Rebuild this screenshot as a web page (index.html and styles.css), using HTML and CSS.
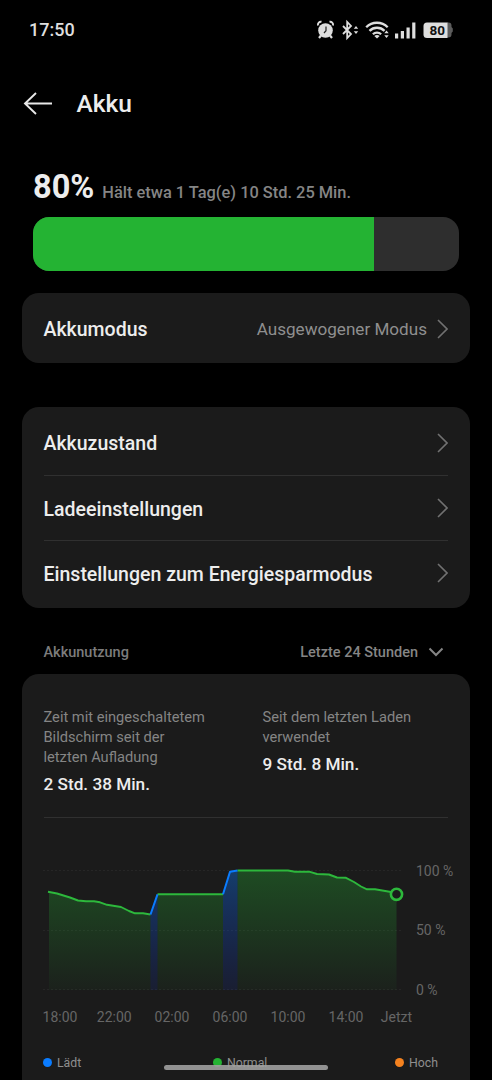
FILE: index.html
```html
<!DOCTYPE html>
<html lang="de">
<head>
    <meta charset="UTF-8">
    <meta name="viewport" content="width=device-width, initial-scale=1.0">
    <title>Akku</title>
    <link rel="stylesheet" href="styles.css">
</head>
<body>
    <div class="status-bar">
        <span class="clock">17:50</span>
        <svg class="status-icons" width="140" height="24" viewBox="0 0 140 24">
            <!-- Wecker -->
            <g fill="none" stroke="#dedede">
                <circle cx="12.500" cy="12.500" r="7.300" fill="#dedede" stroke="none"/>
                <path d="M5 7.500a3 3 0 0 1 3.500-3.700M20 7.500a3 3 0 0 0-3.500-3.700" stroke-width="1.900"/>
                <path d="M8 17.500l-2 2.500M17 17.500l2 2.500" stroke-width="2.200"/>
                <path d="M13 8.500v4.200l-2 2.300" stroke="#222" stroke-width="1.200"/>
            </g>
            <!-- Bluetooth -->
            <path d="M30 8l8 8-3.800 4V4l3.800 4-8 8" fill="none" stroke="#dedede" stroke-width="1.800"/>
            <path d="M40.800 10.800l2.200-2.800 2.200 2.800zM40.800 13.200l2.200 2.800 2.200-2.800z" fill="#dedede"/>
            <!-- WLAN -->
            <g fill="none" stroke="#dedede" stroke-width="2.300">
                <path d="M53.200 9.300a15 15 0 0 1 21.500 0"/>
                <path d="M56.500 12.900a10.500 10.500 0 0 1 15 0"/>
                <path d="M59.900 16.300a5.800 5.800 0 0 1 8.200 0"/>
            </g>
            <path d="M61.300 17.900q2.700-2 5.400 0l-2.700 2.600z" fill="#dedede"/>
            <path d="M71.300 15.200l2.200-2.700 2.200 2.700zM71.300 17.300l2.200 2.700 2.200-2.700z" fill="#dedede"/>
            <!-- Mobilfunk -->
            <path d="M82 15.500h3.200v5H82zM87.800 13h3.200v7.500h-3.200zM93.500 9.500h3.200v11h-3.200zM99.200 4.500h3.200v16h-3.200z" fill="#dedede"/>
            <!-- Akku -->
            <path d="M134 4.500h1.500q3 0 3 3v1.500l1.300 1.500v3l-1.300 1.500v1.500q0 3-3 3H134z" fill="#5c5c5c"/>
            <path d="M114 4.500H134.500v15.500h-20.500q-3.500 0-3.500-3.500v-8.500q0-3.500 3.500-3.500z" fill="#dedede"/>
            <text class="battery-text" x="124.300" y="17" text-anchor="middle">80</text>
        </svg>
    </div>

    <header class="header">
        <svg width="30" height="24" viewBox="0 0 30 24">
            <path d="M29 11.500H2M13 1L2 11.500l11 10.500" fill="none" stroke="#e8e8e8" stroke-width="1.900"/>
        </svg>
        <h1>Akku</h1>
    </header>

    <section class="battery">
        <div class="battery-info">
            <span class="percent">80%</span>
            <span class="remaining">Hält etwa 1 Tag(e) 10 Std. 25 Min.</span>
        </div>
        <div class="battery-bar">
            <div class="battery-fill" style="width: 80%"></div>
        </div>
    </section>

    <div class="card mode-card">
        <div class="row">
            <span class="label">Akkumodus</span>
            <span class="value">Ausgewogener Modus</span>
            <svg class="chevron" width="11" height="20" viewBox="0 0 11 20"><path d="M1 1l9 9-9 9"/></svg>
        </div>
    </div>

    <div class="card list-card">
        <div class="row">
            <span class="label">Akkuzustand</span>
            <svg class="chevron" width="11" height="20" viewBox="0 0 11 20"><path d="M1 1l9 9-9 9"/></svg>
        </div>
        <div class="row">
            <span class="label">Ladeeinstellungen</span>
            <svg class="chevron" width="11" height="20" viewBox="0 0 11 20"><path d="M1 1l9 9-9 9"/></svg>
        </div>
        <div class="row">
            <span class="label">Einstellungen zum Energiesparmodus</span>
            <svg class="chevron" width="11" height="20" viewBox="0 0 11 20"><path d="M1 1l9 9-9 9"/></svg>
        </div>
    </div>

    <div class="section-head">
        <span class="section-title">Akkunutzung</span>
        <span class="period">Letzte 24 Stunden</span>
        <svg width="16" height="10" viewBox="0 0 16 10">
            <path d="M1.500 1.500L8 8l6.500-6.500" fill="none" stroke="#858585" stroke-width="2"/>
        </svg>
    </div>

    <div class="card usage-card">
        <div class="stats">
            <div class="stat">
                <p>Zeit mit eingeschaltetem<br>Bildschirm seit der<br>letzten Aufladung</p>
                <strong>2 Std. 38 Min.</strong>
            </div>
            <div class="stat">
                <p>Seit dem letzten Laden<br>verwendet</p>
                <strong>9 Std. 8 Min.</strong>
            </div>
        </div>

        <svg class="chart" width="448" height="212" viewBox="22 818 448 212">
            <defs>
                <linearGradient id="green" gradientUnits="userSpaceOnUse" x1="0" y1="870" x2="0" y2="990">
                    <stop offset="0" stop-color="#24b333" stop-opacity=".32"/>
                    <stop offset="1" stop-color="#24b333" stop-opacity=".04"/>
                </linearGradient>
                <linearGradient id="blue" gradientUnits="userSpaceOnUse" x1="0" y1="870" x2="0" y2="990">
                    <stop offset="0" stop-color="#0a7cff" stop-opacity=".36"/>
                    <stop offset="1" stop-color="#0a3cff" stop-opacity=".1"/>
                </linearGradient>
            </defs>
            <path d="M43 870.500H403M43 930.500H403M43 989.500H403" stroke="#262626" stroke-dasharray="2 2"/>
            <g fill="url(#green)">
                <path d="M49 892L57 893.500 70 897.500 78 900.500 86 901.300 94 901.300 100 902.300 107 904.800 121 907 129 911 135 913.300 143 913.300 150.500 914.500V990H49z"/>
                <path d="M157.500 894.300H223V990H157.500z"/>
                <path d="M237.500 870.500H288L295 871.800H310L317 874 329 874.500 337 877.500 346 877.800 354 882 361 886.500 367 889.300H375L396.500 892V990H237.500z"/>
            </g>
            <path d="M150.500 914.500L157.500 894.300V990H150.500zM223 894.300L230 871.700 237.500 870.500V990H223z" fill="url(#blue)"/>
            <g fill="none" stroke="#2db83c" stroke-width="1.900" stroke-linejoin="round">
                <path d="M48 891.800L57 893.500 70 897.500 78 900.500 86 901.300 94 901.300 100 902.300 107 904.800 121 907 129 911 135 913.300 143 913.300 150.500 914.500"/>
                <path d="M157.500 894.300H223"/>
                <path d="M237.500 870.500H288L295 871.800H310L317 874 329 874.500 337 877.500 346 877.800 354 882 361 886.500 367 889.300H375L391 892"/>
            </g>
            <path d="M150.500 914.500L157.500 894.300M223 894.300L230 871.700 237.500 870.500" fill="none" stroke="#0a7cff" stroke-width="2" stroke-linejoin="round"/>
            <circle cx="396.500" cy="894.300" r="5.600" fill="#1b1b1b" stroke="#2db83c" stroke-width="2.600"/>
            <g class="axis">
                <text x="416" y="876">100 %</text>
                <text x="416" y="935">50 %</text>
                <text x="416" y="994.500">0 %</text>
            </g>
            <g class="axis axis-x">
                <text x="60" y="1021.500">18:00</text>
                <text x="114.300" y="1021.500">22:00</text>
                <text x="172" y="1021.500">02:00</text>
                <text x="230" y="1021.500">06:00</text>
                <text x="288" y="1021.500">10:00</text>
                <text x="346" y="1021.500">14:00</text>
                <text x="396.500" y="1021.500">Jetzt</text>
            </g>
        </svg>

        <div class="legend">
            <span class="charging">Lädt</span>
            <span class="normal">Normal</span>
            <span class="high">Hoch</span>
        </div>
    </div>

    <div class="nav-handle"></div>
</body>
</html>
```

FILE: styles.css
```css
* {
    box-sizing: border-box;
}

html {
    background: #000;
}

body {
    margin: 0;
    padding: 0 22px;
    height: 1080px;
    overflow: hidden;
    position: relative;
    background: #000;
    color: #ededed;
    font-family: Roboto, sans-serif;
}

svg {
    display: block;
    flex-shrink: 0;
}

.status-bar {
    height: 60px;
    padding: 0 17px 1px 7px;
    display: flex;
    align-items: center;
    justify-content: space-between;
}

.clock {
    font-size: 18px;
    font-weight: 500;
    color: #dedede;
}

.battery-text {
    font-size: 13.5px;
    font-weight: 700;
    fill: #111;
}

.header {
    height: 88px;
    padding-left: 1px;
    display: flex;
    align-items: center;
    gap: 23.5px;
}

.header h1 {
    margin: 0;
    padding-bottom: 2px;
    font-size: 24.5px;
    font-weight: 500;
}

.battery {
    height: 145px;
    padding: 18px 11px 0;
}

.battery-info {
    height: 51px;
    display: flex;
    align-items: baseline;
    gap: 8px;
}

.percent {
    font-size: 32.5px;
    line-height: 43px;
    font-weight: 700;
}

.remaining {
    font-size: 16.4px;
    font-weight: 500;
    color: #858585;
}

.battery-bar {
    height: 54px;
    border-radius: 16px;
    background: #2e2e2e;
    overflow: hidden;
}

.battery-fill {
    height: 100%;
    background: #24b333;
}

.card {
    border-radius: 17px;
    background: #1b1b1b;
}

.mode-card {
    height: 70px;
    padding: 3px 22px 0 21.5px;
    margin-bottom: 44px;
}

.list-card {
    height: 201px;
    padding: 3px 22px 0 21.5px;
}

.row {
    height: 65px;
    display: flex;
    align-items: center;
}

.list-card .row + .row {
    border-top: 1px solid #303030;
}

.label {
    flex: 1;
    padding-top: 2px;
    font-size: 19.5px;
    font-weight: 500;
}

.value {
    margin-right: 10px;
    font-size: 17.1px;
    color: #8f8f8f;
}

.chevron {
    fill: none;
    stroke: #717171;
    stroke-width: 1.6;
}

.section-head {
    height: 66px;
    padding: 22px 26px 0 21.5px;
    display: flex;
    align-items: center;
    font-size: 14.5px;
    font-weight: 500;
    color: #7c7c7c;
}

.section-title {
    flex: 1;
}

.period {
    margin-right: 10px;
    color: #858585;
}

.usage-card {
    height: 430px;
    padding-top: 33px;
}

.stats {
    height: 111px;
    margin: 0 22px 0 21.5px;
    display: grid;
    grid-template-columns: 219px 1fr;
    border-bottom: 1px solid #303030;
}

.stat p {
    margin: 0 0 4px;
    font-size: 14.65px;
    line-height: 20px;
    color: #858585;
}

.stat strong {
    display: inline-block;
    font-size: 17.2px;
    line-height: 26px;
    font-weight: 500;
}

.axis {
    font-size: 14px;
    fill: #666;
}

.axis-x {
    text-anchor: middle;
}

.legend {
    padding: 25px 32px 0 21px;
    display: flex;
    justify-content: space-between;
    font-size: 12.3px;
    line-height: 16px;
    color: #8f8f8f;
}

.legend span {
    display: flex;
    align-items: center;
    gap: 5px;
}

.legend span::before {
    content: "";
    width: 9px;
    height: 9px;
    margin-top: -1px;
    border-radius: 50%;
}

.legend .normal {
    margin-left: 4px;
}

.charging::before {
    background: #0a7cff;
}

.normal::before {
    background: #24b333;
}

.high::before {
    background: #f5821f;
}

/* liegt über der Legende */
.nav-handle {
    position: absolute;
    left: 164px;
    bottom: 10px;
    width: 164px;
    height: 5px;
    border-radius: 3px;
    background: rgba(160, 160, 160, 0.9);
}
```
